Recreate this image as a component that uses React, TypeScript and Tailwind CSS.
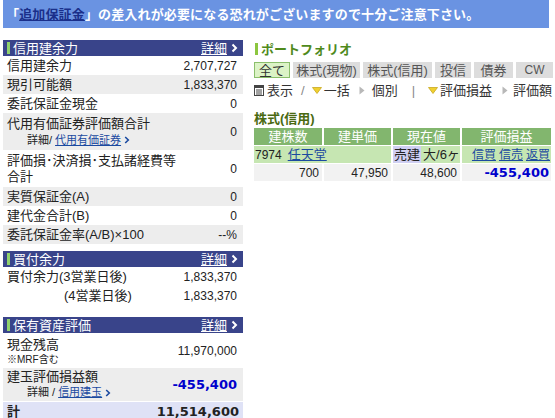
import React from "react";

const FONT = "font-['Liberation_Sans','Noto_Sans_CJK_JP',sans-serif]";

function Chevron() {
  return (
    <svg width="7" height="10" viewBox="0 0 7 10" className="shrink-0">
      <path d="M1.5 1.5 L5 5 L1.5 8.5" stroke="currentColor" strokeWidth="2" fill="none" />
    </svg>
  );
}

function SmallChevron() {
  return (
    <svg width="6" height="8" viewBox="0 0 6 8" className="shrink-0 inline-block">
      <path d="M1.2 1 L4.3 4 L1.2 7" stroke="currentColor" strokeWidth="1.6" fill="none" />
    </svg>
  );
}

function Header({ title }: { title: string }) {
  return (
    <div className="h-[16px] bg-[#39448a] flex items-center text-white whitespace-nowrap">
      <div className="w-[3px] h-[12px] bg-[#8fd06c] ml-[4px]" />
      <span className="ml-[3px] text-[13px] leading-none">{title}</span>
      <span className="ml-auto mr-[5px] flex items-center gap-[4px]">
        <span className="underline text-[13px] leading-none">詳細</span>
        <Chevron />
      </span>
    </div>
  );
}

function Row({
  label,
  value,
  gray,
}: {
  label: React.ReactNode;
  value: React.ReactNode;
  gray?: boolean;
}) {
  return (
    <div
      className={`h-[19px] flex items-center justify-between pl-[4px] pr-[6px] whitespace-nowrap ${
        gray ? "bg-[#ededed]" : "bg-white"
      }`}
    >
      <span className="text-[13px] leading-none text-[#222]">{label}</span>
      <span className="text-[12px] leading-none text-[#222]">{value}</span>
    </div>
  );
}

function DownTri() {
  return (
    <svg width="10" height="7" viewBox="0 0 10 7" className="shrink-0">
      <path d="M0.5 0.5 L9.5 0.5 L5 6.5 Z" fill="#f0d030" stroke="#c8a820" strokeWidth="0.8" />
    </svg>
  );
}

function RightTri() {
  return (
    <svg width="6" height="9" viewBox="0 0 6 9" className="shrink-0">
      <path d="M0.5 0.5 L5.5 4.5 L0.5 8.5 Z" fill="#b8b8b8" />
    </svg>
  );
}

function ListIcon() {
  return (
    <svg width="10" height="11" viewBox="0 0 10 11" className="shrink-0">
      <rect x="0.5" y="0.5" width="9" height="10" fill="#fff" stroke="#444" />
      <rect x="0.5" y="0.5" width="9" height="2.5" fill="#444" />
      <line x1="2" y1="5" x2="8" y2="5" stroke="#444" />
      <line x1="2" y1="7" x2="8" y2="7" stroke="#444" />
      <line x1="2" y1="9" x2="8" y2="9" stroke="#444" />
    </svg>
  );
}

export default function App() {
  return (
    <div className={`w-[555px] h-[418px] bg-white overflow-hidden ${FONT}`}>
      {/* banner */}
      <div className="ml-[3px] w-[546px] h-[28px] bg-[#6a93e2] flex items-center pl-[3px] whitespace-nowrap">
        <span className="text-white font-bold text-[13px] leading-none tracking-[0.15px]">
          「<span className="text-[#1a2f8a] underline">追加保証金</span>」の差入れが必要になる恐れがございますので十分ご注意下さい。
        </span>
      </div>

      <div className="flex mt-[12px]">
        {/* left */}
        <div className="ml-[3px] w-[240px] shrink-0 flex flex-col">
          <Header title="信用建余力" />
          <Row label="信用建余力" value="2,707,727" />
          <Row label="現引可能額" value="1,833,370" gray />
          <Row label="委託保証金現金" value="0" />
          <div className="h-[37px] bg-[#ededed] flex items-center justify-between pl-[4px] pr-[6px] whitespace-nowrap">
            <div className="flex flex-col">
              <span className="text-[13px] leading-[17px] text-[#222]">代用有価証券評価額合計</span>
              <span className="text-[11px] leading-[16px] text-[#222] pl-[20px] flex items-center gap-[3px]">
                詳細/ <span className="text-[#1b4aa0] underline">代用有価証券</span>
                <span className="text-[#1b4aa0] flex items-center"><SmallChevron /></span>
              </span>
            </div>
            <span className="text-[12px] leading-none text-[#222]">0</span>
          </div>
          <div className="h-[37px] bg-white flex items-center justify-between pl-[4px] pr-[6px] whitespace-nowrap">
            <span className="text-[13px] leading-[16px] text-[#222]">
              評価損･決済損･支払諸経費等
              <br />
              合計
            </span>
            <span className="text-[12px] leading-none text-[#222]">0</span>
          </div>
          <Row label="実質保証金(A)" value="0" gray />
          <Row label="建代金合計(B)" value="0" />
          <Row label="委託保証金率(A/B)×100" value="--%" gray />

          <div className="mt-[7px]">
            <Header title="買付余力" />
          </div>
          <Row label="買付余力(3営業日後)" value="1,833,370" />
          <Row label={<span className="pl-[57px]">(4営業日後)</span>} value="1,833,370" />

          <div className="mt-[12px]">
            <Header title="保有資産評価" />
          </div>
          <div className="h-[35px] bg-white flex items-center justify-between pl-[4px] pr-[6px] whitespace-nowrap">
            <div className="flex flex-col">
              <span className="text-[13px] leading-[17px] text-[#222]">現金残高</span>
              <span className="text-[10px] leading-[13px] text-[#222]">※MRF含む</span>
            </div>
            <span className="text-[12px] leading-none text-[#222]">11,970,000</span>
          </div>
          <div className="h-[33px] bg-[#ededed] flex items-center justify-between pl-[4px] pr-[6px] whitespace-nowrap">
            <div className="flex flex-col">
              <span className="text-[13px] leading-[16px] text-[#222]">建玉評価損益額</span>
              <span className="text-[11px] leading-[15px] text-[#222] pl-[20px] flex items-center gap-[3px]">
                詳細 / <span className="text-[#1b4aa0] underline">信用建玉</span>
                <span className="text-[#1b4aa0] flex items-center"><SmallChevron /></span>
              </span>
            </div>
            <span className="text-[13px] leading-none text-[#0000cc] font-bold font-['DejaVu_Sans',sans-serif]">
              -455,400
            </span>
          </div>
          <div className="mt-[1px] h-[19px] bg-[#dfe2f6] flex items-center justify-between pl-[4px] pr-[4px] whitespace-nowrap">
            <span className="text-[13px] leading-none text-[#222] font-bold">計</span>
            <span className="text-[13px] leading-none text-[#222] font-bold font-['DejaVu_Sans',sans-serif]">
              11,514,600
            </span>
          </div>
        </div>

        {/* right */}
        <div className="ml-[10px] w-[300px] shrink-0 flex flex-col pl-[1px] whitespace-nowrap">
          <div className="h-[16px] flex items-center mt-[1px]">
            <div className="w-[3px] h-[12px] bg-[#8cc63f] ml-[1px]" />
            <span className="ml-[3px] text-[13px] leading-none font-bold text-[#4f8a1c]">ポートフォリオ</span>
          </div>
          <div className="flex gap-[3px] mt-[5px] h-[16px] text-[13px] leading-none">
            <div className="w-[36px] shrink-0 bg-[#dcf3c6] border border-[#8bbf6c] flex items-center justify-center text-[#333]">
              全て
            </div>
            <div className="w-[67px] shrink-0 bg-[#dddddd] flex items-center justify-center text-[#555]">株式(現物)</div>
            <div className="w-[69px] shrink-0 bg-[#dddddd] flex items-center justify-center text-[#555]">株式(信用)</div>
            <div className="w-[36px] shrink-0 bg-[#dddddd] flex items-center justify-center text-[#555]">投信</div>
            <div className="w-[39px] shrink-0 bg-[#dddddd] flex items-center justify-center text-[#555]">債券</div>
            <div className="w-[37px] shrink-0 bg-[#dddddd] flex items-center justify-center text-[#555] text-[12px]">CW</div>
          </div>
          <div className="flex items-center mt-[4px] h-[16px] text-[13px] leading-none text-[#333]">
            <ListIcon />
            <span className="ml-[3px] shrink-0">表示</span>
            <span className="ml-[8px] shrink-0 text-[#888]">/</span>
            <span className="ml-[7px] shrink-0 flex items-center"><DownTri /></span>
            <span className="ml-[2px] shrink-0">一括</span>
            <span className="ml-[9px] shrink-0 flex items-center"><RightTri /></span>
            <span className="ml-[7px] shrink-0">個別</span>
            <span className="ml-[14px] shrink-0 text-[#888]">|</span>
            <span className="ml-[13px] shrink-0 flex items-center"><DownTri /></span>
            <span className="ml-[2px] shrink-0">評価損益</span>
            <span className="ml-[10px] shrink-0 flex items-center"><RightTri /></span>
            <span className="ml-[5px] shrink-0">評価額</span>
          </div>

          <div className="mt-[13px] h-[15px] flex items-center text-[13px] leading-none font-bold text-[#4a6a12]">
            株式(信用)
          </div>
          <div className="mt-[2px] grid grid-cols-[68px_67px_67px_89px] gap-x-[2px] gap-y-[1px] w-[297px]">
            <div className="h-[17px] bg-[#82b66e] text-white text-[13px] leading-none flex items-center justify-center">建株数</div>
            <div className="h-[17px] bg-[#82b66e] text-white text-[13px] leading-none flex items-center justify-center">建単価</div>
            <div className="h-[17px] bg-[#82b66e] text-white text-[13px] leading-none flex items-center justify-center">現在値</div>
            <div className="h-[17px] bg-[#82b66e] text-white text-[13px] leading-none flex items-center justify-center">評価損益</div>

            <div className="col-span-2 h-[17px] bg-[#c6e6b2] text-[13px] leading-none flex items-center">
              <span className="text-[12px] text-[#222] ml-[1px]">7974</span>
              <span className="ml-[6px] text-[#1b4aa0] underline">任天堂</span>
            </div>
            <div className="h-[17px] bg-[#c6e6b2] text-[13px] leading-none flex items-center text-[#222] overflow-hidden">
              <span className="bg-[#cfcff2] h-full flex items-center px-[1px] shrink-0">売建</span>
              <span className="ml-[2px] shrink-0">大/6ヶ</span>
            </div>
            <div className="h-[17px] bg-[#c6e6b2] text-[12px] leading-none flex items-center justify-end gap-[3px] pr-[1px] text-[#1b4aa0]">
              <span className="underline">信買</span>
              <span className="underline">信売</span>
              <span className="underline">返買</span>
            </div>

            <div className="h-[17px] bg-[#f2f2f2] text-[12px] leading-none flex items-center justify-end pr-[3px] text-[#222]">700</div>
            <div className="h-[17px] bg-[#f2f2f2] text-[12px] leading-none flex items-center justify-end pr-[3px] text-[#222]">47,950</div>
            <div className="h-[17px] bg-[#f2f2f2] text-[12px] leading-none flex items-center justify-end pr-[3px] text-[#222]">48,600</div>
            <div className="h-[17px] bg-[#f2f2f2] text-[13px] leading-none flex items-center justify-end pr-[2px] text-[#0000cc] font-bold font-['DejaVu_Sans',sans-serif]">
              -455,400
            </div>
          </div>
        </div>
      </div>
    </div>
  );
}
